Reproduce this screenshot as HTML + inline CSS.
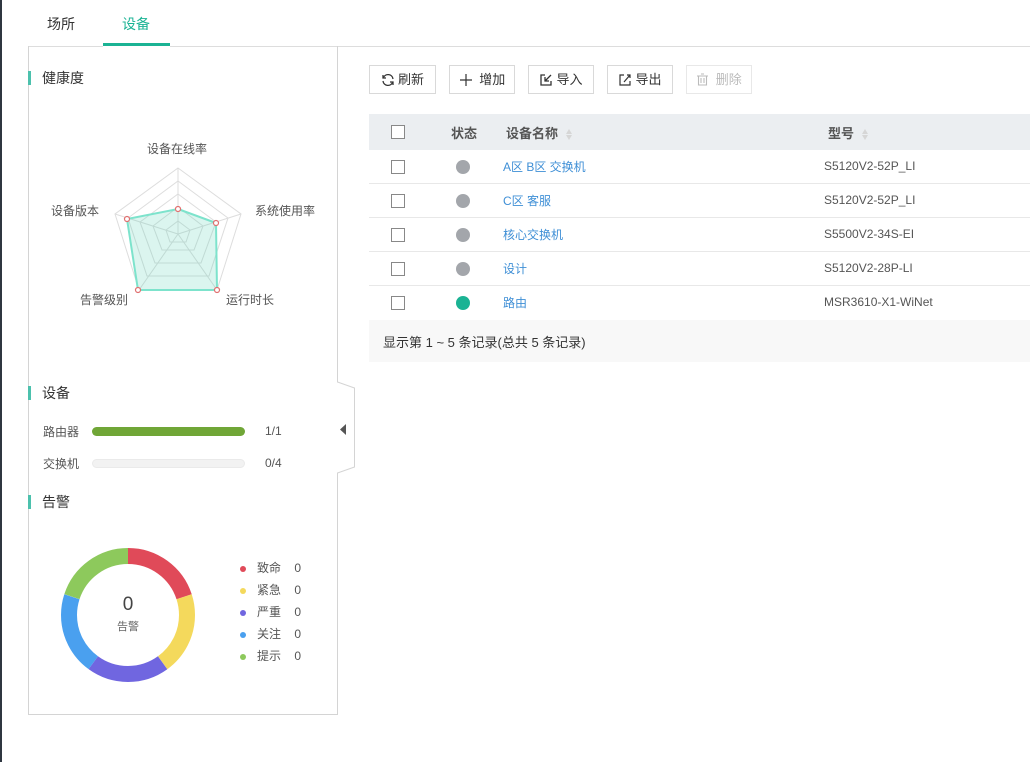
<!DOCTYPE html>
<html><head><meta charset="utf-8"><style>
*{margin:0;padding:0;box-sizing:border-box}
body{width:1030px;height:762px;background:#fff;font-family:"Liberation Sans","Noto Sans CJK SC",sans-serif;color:#333;position:relative;overflow:hidden;font-size:12px}
.a{position:absolute}
.title{position:absolute;font-size:14px;color:#333;padding-left:11px;border-left:3px solid #4cc1ad;height:14px;line-height:14px}
.btn{position:absolute;top:65px;height:29px;border:1px solid #d9d9d9;background:#fff;font-size:13px;line-height:27px;color:#333;display:flex;align-items:center;justify-content:center;gap:3px}
.cb{position:absolute;width:14px;height:14px;border:1px solid #888;background:#fff}
.row{position:absolute;left:369px;width:661px;height:34px;border-bottom:1px solid #e8e8e8}
.dot{position:absolute;width:14px;height:14px;border-radius:50%;background:#a3a6ab}
.nm{position:absolute;left:134px;top:8px;color:#3f8fd6;font-size:12px}
.md{position:absolute;left:455px;top:9px;color:#555;font-size:12px}
.srt{display:inline-block;vertical-align:middle;margin-left:8px;width:7px}
.srt i{display:block;width:0;height:0;border-left:3.5px solid transparent;border-right:3.5px solid transparent}
</style></head><body>
<div class="a" style="left:0;top:0;width:2px;height:762px;background:#2f3640"></div>
<div class="a" style="left:47px;top:14px;font-size:14px;color:#333">场所</div>
<div class="a" style="left:122px;top:14px;font-size:14px;color:#1bb394">设备</div>
<div class="a" style="left:103px;top:43px;width:67px;height:3px;background:#1bb394"></div>
<div class="a" style="left:170px;top:46px;width:860px;height:1px;background:#ddd"></div>
<div class="a" style="left:28px;top:46px;width:75px;height:1px;background:#ddd"></div>
<svg class="a" style="left:0;top:0" width="1030" height="762">
<path d="M28.5 46 V714.5 H337.5 V473 L354.5 467 V388 L337.5 382 V46" fill="none" stroke="#d4d4d4"/>
<path d="M346 424 L340 429.5 L346 435 Z" fill="#555"/>
<g fill="none" stroke="#ddd">
<polygon points="178,168 241,214 217,290 139,290 115,214"/>
<polygon points="178,181 228,218 209,276 147,276 128,218"/>
<polygon points="178,194 216,222 201,263 155,263 140,222"/>
<polygon points="178,207 203,226 194,250 162,250 153,226"/>
<polygon points="178,221 190,230 186,242 170,242 166,230"/>
<path d="M178 234 L178 168 M178 234 L241 214 M178 234 L217 290 M178 234 L139 290 M178 234 L115 214"/>
</g>
<polygon points="178,209 216,223 217,290 138,290 127,219" fill="rgba(90,210,180,0.22)" stroke="#7de3cc" stroke-width="2"/>
<g fill="#fff" stroke="#e07070" stroke-width="1.2"><circle cx="178" cy="209" r="2.5"/><circle cx="216" cy="223" r="2.5"/><circle cx="217" cy="290" r="2.5"/><circle cx="138" cy="290" r="2.5"/><circle cx="127" cy="219" r="2.5"/></g>
<g transform="rotate(-90 128 615)" fill="none" stroke-width="16">
<circle cx="128" cy="615" r="59" stroke="#e04a59" stroke-dasharray="74.1 370.7"/>
<circle cx="128" cy="615" r="59" stroke="#f4d95c" stroke-dasharray="74.1 370.7" stroke-dashoffset="-74.1"/>
<circle cx="128" cy="615" r="59" stroke="#7066e0" stroke-dasharray="74.1 370.7" stroke-dashoffset="-148.3"/>
<circle cx="128" cy="615" r="59" stroke="#4aa0ef" stroke-dasharray="74.1 370.7" stroke-dashoffset="-222.4"/>
<circle cx="128" cy="615" r="59" stroke="#8dc95c" stroke-dasharray="74.1 370.7" stroke-dashoffset="-296.6"/>
</g>
</svg>
<div class="title" style="left:28px;top:71px">健康度</div>
<div class="a" style="left:147px;top:140px;color:#555">设备在线率</div>
<div class="a" style="left:255px;top:202px;color:#555">系统使用率</div>
<div class="a" style="left:51px;top:202px;color:#555">设备版本</div>
<div class="a" style="left:80px;top:291px;color:#555">告警级别</div>
<div class="a" style="left:226px;top:291px;color:#555">运行时长</div>
<div class="title" style="left:28px;top:386px">设备</div>
<div class="a" style="left:43px;top:423px;color:#555">路由器</div>
<div class="a" style="left:92px;top:427px;width:153px;height:9px;border-radius:5px;background:#70a637"></div>
<div class="a" style="left:265px;top:424px;color:#555">1/1</div>
<div class="a" style="left:43px;top:455px;color:#555">交换机</div>
<div class="a" style="left:92px;top:459px;width:153px;height:9px;border-radius:5px;background:#f2f2f2;border:1px solid #eaeaea"></div>
<div class="a" style="left:265px;top:456px;color:#555">0/4</div>
<div class="title" style="left:28px;top:495px">告警</div>
<div class="a" style="left:108px;top:594px;width:40px;text-align:center;font-size:19px;color:#444">0</div>
<div class="a" style="left:108px;top:618px;width:40px;text-align:center;font-size:11px;color:#666">告警</div>
<div class="a" style="left:240px;top:557px;line-height:22px;color:#555">
<div><span style="display:inline-block;width:6px;height:6px;border-radius:50%;background:#e04a59;margin-right:11px;vertical-align:middle"></span>致命&nbsp;&nbsp;&nbsp;&nbsp;0</div>
<div><span style="display:inline-block;width:6px;height:6px;border-radius:50%;background:#f4d95c;margin-right:11px;vertical-align:middle"></span>紧急&nbsp;&nbsp;&nbsp;&nbsp;0</div>
<div><span style="display:inline-block;width:6px;height:6px;border-radius:50%;background:#7066e0;margin-right:11px;vertical-align:middle"></span>严重&nbsp;&nbsp;&nbsp;&nbsp;0</div>
<div><span style="display:inline-block;width:6px;height:6px;border-radius:50%;background:#4aa0ef;margin-right:11px;vertical-align:middle"></span>关注&nbsp;&nbsp;&nbsp;&nbsp;0</div>
<div><span style="display:inline-block;width:6px;height:6px;border-radius:50%;background:#8dc95c;margin-right:11px;vertical-align:middle"></span>提示&nbsp;&nbsp;&nbsp;&nbsp;0</div>
</div>

<div class="btn" style="left:369px;width:67px"><svg width="14" height="14" viewBox="0 0 14 14" fill="none" stroke="#333" stroke-width="1.3"><path d="M12 6 A5 5 0 0 0 2.5 4.5 M2 8 A5 5 0 0 0 11.5 9.5"/><path d="M2 2 V5 H5 M12 12 V9 H9"/></svg>刷新</div>
<div class="btn" style="left:449px;width:66px"><svg width="14" height="14" viewBox="0 0 14 14" stroke="#333" stroke-width="1.2"><path d="M7 1 V13 M1 7 H13"/></svg>&nbsp;增加</div>
<div class="btn" style="left:528px;width:66px"><svg width="14" height="14" viewBox="0 0 14 14" fill="none" stroke="#333" stroke-width="1.3"><path d="M6 2 H2 V12 H12 V8"/><path d="M12 2 L6 8 M6 4 V8 H10"/></svg>导入</div>
<div class="btn" style="left:607px;width:66px"><svg width="14" height="14" viewBox="0 0 14 14" fill="none" stroke="#333" stroke-width="1.2"><path d="M6 2 H2 V12 H12 V8"/><path d="M6 9 L12 2 M9 2 H12 V5"/></svg>导出</div>
<div class="btn" style="left:686px;width:66px;border-color:#e8e8e8;color:#bbb"><svg width="13" height="13" viewBox="0 0 13 13" fill="none" stroke="#bbb" stroke-width="1.1"><path d="M1 3 H12 M5 1 H8 M2.5 3 V12 H10.5 V3 M5 5 V10 M8 5 V10"/></svg>&nbsp;删除</div>

<div class="a" style="left:369px;top:114px;width:661px;height:36px;background:#ebeef1"></div>
<div class="cb" style="left:391px;top:125px"></div>
<div class="a" style="left:451px;top:123px;font-size:13px;color:#555;font-weight:bold">状态</div>
<div class="a" style="left:506px;top:123px;font-size:13px;color:#555;font-weight:bold">设备名称<span class="srt"><i style="border-bottom:5px solid #d6d6d6;margin-bottom:1px"></i><i style="border-top:5px solid #d6d6d6"></i></span></div>
<div class="a" style="left:828px;top:123px;font-size:13px;color:#555;font-weight:bold">型号<span class="srt"><i style="border-bottom:5px solid #d6d6d6;margin-bottom:1px"></i><i style="border-top:5px solid #d6d6d6"></i></span></div>

<div class="row" style="top:150px"><div class="cb" style="left:22px;top:10px"></div><div class="dot" style="left:87px;top:10px"></div><div class="nm">A区 B区 交换机</div><div class="md">S5120V2-52P_LI</div></div>
<div class="row" style="top:184px"><div class="cb" style="left:22px;top:10px"></div><div class="dot" style="left:87px;top:10px"></div><div class="nm">C区 客服</div><div class="md">S5120V2-52P_LI</div></div>
<div class="row" style="top:218px"><div class="cb" style="left:22px;top:10px"></div><div class="dot" style="left:87px;top:10px"></div><div class="nm">核心交换机</div><div class="md">S5500V2-34S-EI</div></div>
<div class="row" style="top:252px"><div class="cb" style="left:22px;top:10px"></div><div class="dot" style="left:87px;top:10px"></div><div class="nm">设计</div><div class="md">S5120V2-28P-LI</div></div>
<div class="row" style="top:286px;border-bottom:none"><div class="cb" style="left:22px;top:10px"></div><div class="dot" style="left:87px;top:10px;background:#1bb394"></div><div class="nm">路由</div><div class="md">MSR3610-X1-WiNet</div></div>
<div class="a" style="left:369px;top:320px;width:661px;height:42px;background:#f8f8f8"></div>
<div class="a" style="left:383px;top:332px;font-size:13px;color:#333">显示第 1 ~ 5 条记录(总共 5 条记录)</div>
</body></html>
